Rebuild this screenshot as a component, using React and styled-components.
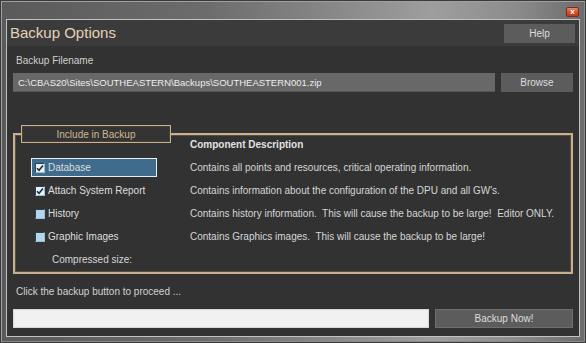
import React from 'react';
import styled, { createGlobalStyle } from 'styled-components';

const Global = createGlobalStyle`
  html, body { margin: 0; padding: 0; background: #6e6e6e; }
  body { font-family: "Liberation Sans", Arial, sans-serif; }
  * { box-sizing: border-box; }
`;

const Window = styled.div`
  width: 586px;
  height: 343px;
  display: flex;
  flex-direction: column;
  padding: 0 5px 5px 5px;
  background: linear-gradient(90deg, #5a5a5a 0%, #6c6c6c 35%, #9e9e9e 74%, #8c8c8c 88%, #6c6c6c 100%);
  border: 1px solid #3a3a3a;
  box-shadow: inset 1px 1px 0 #a0a0a0, inset -1px -1px 0 #8a8a8a;
`;

const TitleBar = styled.div`
  height: 18px;
  flex: none;
  display: flex;
  justify-content: flex-end;
  align-items: flex-start;
  padding-top: 6px;
`;

const CloseButton = styled.div`
  width: 13px;
  height: 10px;
  margin-right: 1px;
  border-radius: 2px;
  border: 1px solid #7a2c1c;
  background: linear-gradient(180deg, #e98a6c 0%, #d2532f 50%, #b8391c 100%);
  display: flex;
  align-items: center;
  justify-content: center;
  color: #fff;
  font-size: 8px;
  line-height: 8px;
  font-weight: bold;
`;

const Panel = styled.div`
  flex: 1;
  display: flex;
  flex-direction: column;
  background: #323232;
  border: 1px solid #c2c2c2;
`;

const Header = styled.div`
  height: 26px;
  flex: none;
  display: flex;
  align-items: center;
  justify-content: space-between;
  padding: 0 4px 0 3px;
  background: #3b3b3b;
`;

const Title = styled.div`
  font-size: 15px;
  color: #e3d3b6;
  line-height: 18px;
`;

const Button = styled.div`
  width: ${p => p.$w}px;
  height: 19px;
  flex: none;
  display: flex;
  align-items: center;
  justify-content: center;
  background: #5c5c5c;
  border: 1px solid ${p => (p.$outlined ? '#6e6e6e' : '#5c5c5c')};
  color: #dcdcdc;
  font-size: 10px;
`;

const Body = styled.div`
  flex: 1;
  display: flex;
  flex-direction: column;
  padding: 8px 6px 8px 6px;
`;

const Label = styled.div`
  height: 14px;
  line-height: 14px;
  font-size: 10px;
  color: #d0d0d0;
  padding-left: 3px;
`;

const Row = styled.div`
  display: flex;
  gap: 6px;
  height: 19px;
  margin-top: ${p => p.$mt}px;
`;

const PathField = styled.div`
  flex: 1;
  height: 19px;
  background: #686868;
  border-bottom: 1px solid #555;
  color: #ececec;
  font-size: 9.5px;
  line-height: 19px;
  padding-left: 5px;
  white-space: nowrap;
  overflow: hidden;
`;

const GroupBox = styled.div`
  position: relative;
  margin-top: 41px;
  height: 141px;
  border: 2px solid #c7b08e;
  box-shadow: inset 0 0 0 1px #5a4d3c;
  display: grid;
  grid-template-columns: 159px 1fr;
  grid-template-rows: 18px repeat(5, 23px);
  padding: 3px 0 0 16px;
`;

const Legend = styled.div`
  position: absolute;
  top: -10px;
  left: 6px;
  width: 150px;
  height: 18px;
  background: #333;
  border: 1px solid #c7b08e;
  box-shadow: inset 0 0 0 1px #4a4034;
  color: #cdb995;
  font-size: 10px;
  display: flex;
  align-items: center;
  justify-content: center;
`;

const ColHeader = styled.div`
  grid-column: 2;
  grid-row: 1;
  font-size: 10px;
  font-weight: bold;
  color: #e2e2e2;
  line-height: 14px;
`;

const Option = styled.div`
  grid-column: 1;
  align-self: center;
  width: 126px;
  height: 19px;
  display: flex;
  align-items: center;
  gap: 3px;
  padding-left: 3px;
  border: 1px solid ${p => (p.$selected ? '#e8eef2' : 'transparent')};
  background: ${p => (p.$selected ? '#3f6c8c' : 'transparent')};
  color: #dedede;
  font-size: 10px;
  white-space: nowrap;
`;

const Box = styled.span`
  width: 10px;
  height: 10px;
  flex: none;
  display: flex;
  align-items: center;
  justify-content: center;
  background: ${p => (p.$checked ? '#e6f0f6' : '#b4d6ec')};
  border-top: 1px solid #2a4152;
  border-left: 1px solid #2a4152;
  border-right: 1px solid #9cc0d6;
  border-bottom: 1px solid #9cc0d6;
`;

const Desc = styled.div`
  grid-column: 2;
  align-self: center;
  font-size: 10px;
  color: #d6d6d6;
  white-space: nowrap;
`;

const Compressed = styled.div`
  grid-column: 1;
  align-self: center;
  font-size: 10px;
  color: #d6d6d6;
  padding-left: 21px;
  white-space: nowrap;
`;

const Status = styled.div`
  margin-top: 11px;
  height: 14px;
  line-height: 14px;
  font-size: 10px;
  color: #d2d2d2;
  padding-left: 3px;
`;

const Progress = styled.div`
  flex: 1;
  height: 19px;
  background: #f0f0f0;
  border: 1px solid #d8d8d8;
`;

const Check = ({ checked }) => (
  <Box $checked={checked}>
    {checked && (
      <svg width="8" height="8" viewBox="0 0 8 8">
        <path d="M1 4.2 L3 6.2 L7 1.5" fill="none" stroke="#1c2c3a" strokeWidth="1.6" />
      </svg>
    )}
  </Box>
);

const options = [
  { label: 'Database', checked: true, selected: true, desc: 'Contains all points and resources, critical operating information.' },
  { label: 'Attach System Report', checked: true, desc: "Contains information about the configuration of the DPU and all GW's." },
  { label: 'History', checked: false, desc: 'Contains history information.  This will cause the backup to be large!  Editor ONLY.' },
  { label: 'Graphic Images', checked: false, desc: 'Contains Graphics images.  This will cause the backup to be large!' },
];

export default function App() {
  return (
    <>
      <Global />
      <Window>
        <TitleBar>
          <CloseButton>x</CloseButton>
        </TitleBar>
        <Panel>
          <Header>
            <Title>Backup Options</Title>
            <Button $w={71}>Help</Button>
          </Header>
          <Body>
            <Label>Backup Filename</Label>
            <Row $mt={5}>
              <PathField>C:\CBAS20\Sites\SOUTHEASTERN\Backups\SOUTHEASTERN001.zip</PathField>
              <Button $w={72}>Browse</Button>
            </Row>
            <GroupBox>
              <Legend>Include in Backup</Legend>
              <ColHeader>Component Description</ColHeader>
              {options.map((o, i) => (
                <React.Fragment key={o.label}>
                  <Option $selected={o.selected} style={{ gridRow: i + 2 }}>
                    <Check checked={o.checked} />
                    {o.label}
                  </Option>
                  <Desc style={{ gridRow: i + 2, whiteSpace: 'pre' }}>{o.desc}</Desc>
                </React.Fragment>
              ))}
              <Compressed style={{ gridRow: 6 }}>Compressed size:</Compressed>
            </GroupBox>
            <Status>Click the backup button to proceed ...</Status>
            <Row $mt={10}>
              <Progress />
              <Button $w={138} $outlined>Backup Now!</Button>
            </Row>
          </Body>
        </Panel>
      </Window>
    </>
  );
}
